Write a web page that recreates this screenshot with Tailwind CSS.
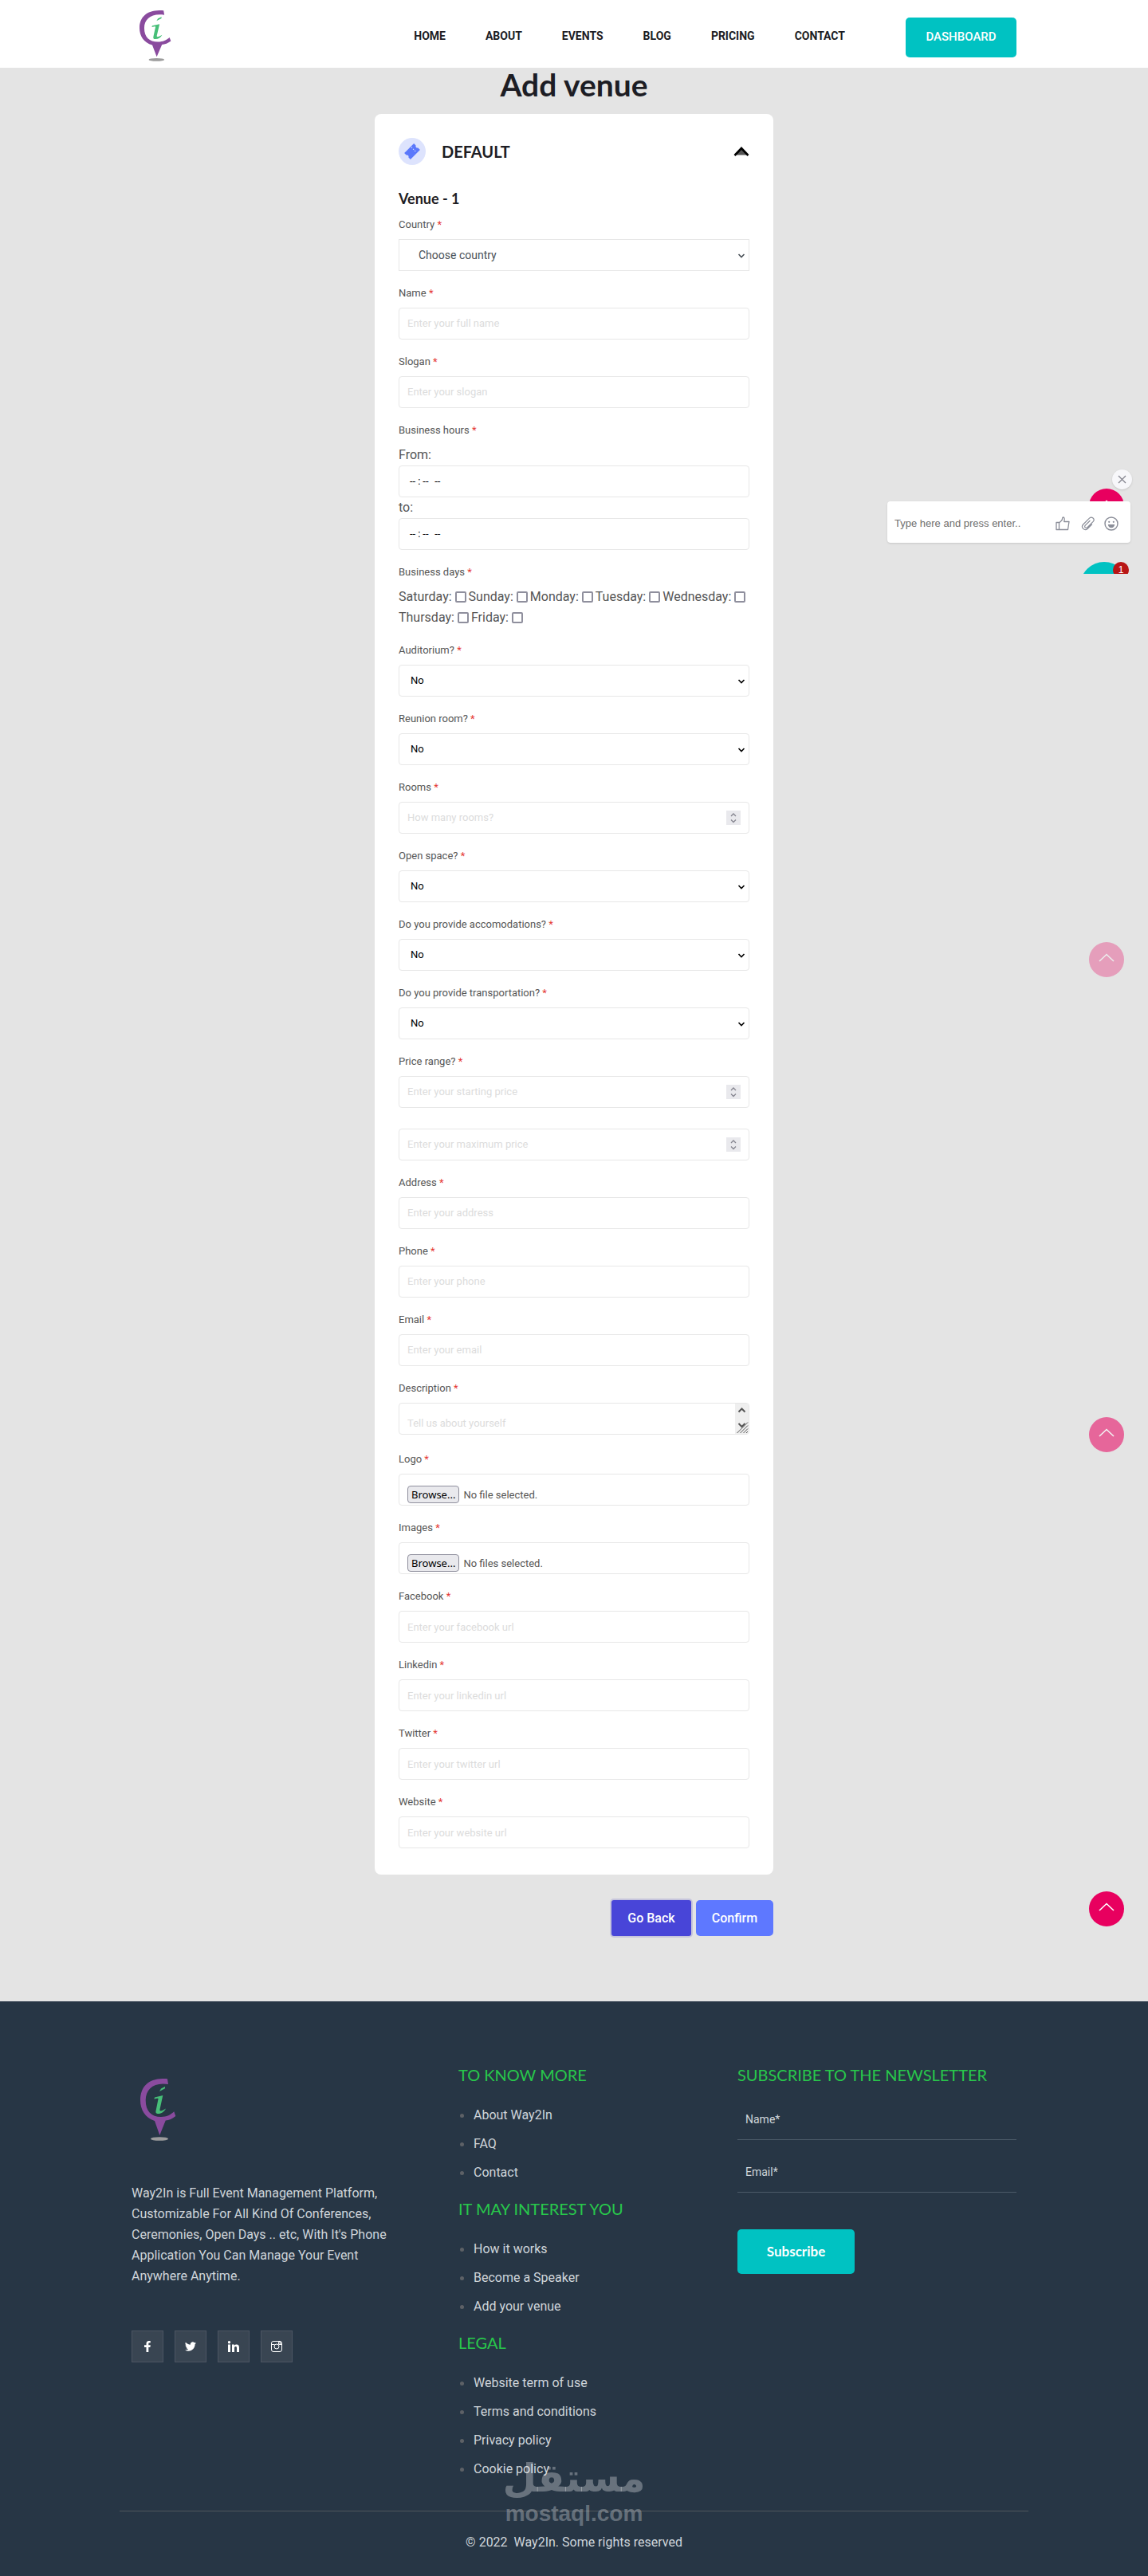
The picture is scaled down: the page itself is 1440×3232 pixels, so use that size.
<!DOCTYPE html>
<html lang="en">
<head>
<meta charset="utf-8">
<meta name="viewport" content="width=device-width, initial-scale=1">
<title>Way2In - Add venue</title>
<script src="https://cdn.jsdelivr.net/npm/@tailwindcss/browser@4"></script>
</head>
<body class="bg-[#e4e4e4] font-['Roboto',sans-serif] text-base text-[#555]">

<!-- Shared symbols -->
<svg class="hidden" aria-hidden="true">
  <symbol id="logo" viewBox="0 0 45 78" preserveAspectRatio="none">
    <path fill="#8a4b9e" d="M34 .3 35 7C17 4 6.7 13 6.7 27c0 14 7.3 21 19.3 21 7 0 12-2.500 16.300-6.700L44.300 47c-4.300 3.500-8.300 5-12.600 5.500L24.300 71 18 53C6 49 0 39 0 27 0 9 12-2 34 .3Z"/>
    <path fill="#47bf78" d="m24 16 2-3.500L31 10v2.200Zm-6.700 9.500.7-2L28.300 21l-3.800 17.500c-.5 2.500 1.500 3 7.500-1-2 4-5.500 6.500-9.500 6.500-3 0-3.500-1.500-2.800-4.500l2.800-14c.3-1.200-1-1-5.200 0Z"/>
    <ellipse cx="24" cy="75.500" rx="11" ry="2.300" fill="#9c9c9c"/>
  </symbol>
  <symbol id="down" viewBox="0 0 10 10"><path d="m1.500 3 3.500 3.500L8.500 3" fill="none" stroke="currentColor" stroke-width="1.600"/></symbol>
  <symbol id="spin" viewBox="0 0 18 18"><path fill="#e9e9ed" d="M0 0h18v18H0z"/><path d="m6 7 3-3 3 3M6 11.500l3 3 3-3" fill="none" stroke="#85858f" stroke-width="1.300"/></symbol>
  <symbol id="totop" viewBox="0 0 44 44"><path d="m13 24 9-8.500 9 8.500" fill="none" stroke="#fff" stroke-width="1.600"/></symbol>
</svg>

<div class="relative">

<header class="bg-white h-[85px]">
  <div class="max-w-[1110px] h-full mx-auto flex items-center justify-between">
    <a href="#" aria-label="Way2In" class="ml-[10px] mt-[5px]"><svg class="w-10 h-16"><use href="#logo"/></svg></a>
    <div class="flex items-center">
      <nav class="flex gap-[50px] text-sm leading-5 font-bold text-[#1d1d24] mt-1 mr-[76px]">
        <a href="#">HOME</a><a href="#">ABOUT</a><a href="#">EVENTS</a><a href="#">BLOG</a><a href="#">PRICING</a><a href="#">CONTACT</a>
      </nav>
      <a href="#" class="flex items-center justify-center mt-2 w-[139px] h-[50px] rounded-[5px] bg-[#00c2c2] text-[15px] font-medium text-white">DASHBOARD</a>
    </div>
  </div>
</header>

<main class="max-w-[500px] mx-auto pb-[82px]">
  <h1 class="text-center font-['Lato',sans-serif] font-bold text-[39px] leading-[42px] text-[#1d1d24] mb-4">Add venue</h1>

  <form>
  <section class="bg-white rounded-[8px] px-[30px] pt-[30px] pb-[33px]">
    <div class="flex items-center h-[34px] mb-[31px]">
      <svg class="size-[34px] mr-5" viewBox="0 0 34 34"><circle cx="17" cy="17" r="17" fill="#dde3fd"/><g transform="rotate(-45 17 17)"><path fill="#5b78fb" d="M8.500 11.500h17v3.500a2.200 2.200 0 0 0 0 4v3.500h-17V19a2.200 2.200 0 0 0 0-4z"/><path d="M20 12.500v9" stroke="#dde3fd" stroke-width="1" stroke-dasharray="1.500 1.500"/></g></svg>
      <h2 class="font-['Lato',sans-serif] font-bold text-xl text-[#1d1d24]">DEFAULT</h2>
      <button type="button" aria-label="Collapse" class="ml-auto"><svg class="w-5 h-3" viewBox="0 0 20 12"><path d="m2 10.500 8-8.500 8 8.500Z" fill="#555"/><path d="m1.500 11 8.500-9 8.500 9" fill="none" stroke="#000" stroke-width="2.600"/></svg></button>
    </div>
    <h3 class="font-['Lato',sans-serif] font-bold text-lg leading-[22px] text-[#1d1d24] mb-3">Venue - 1</h3>

    <div class="flex flex-col gap-[18px]">
      <div>
        <label for="country" class="block text-[13px] leading-5 mb-2">Country <span class="text-[#e53935]">*</span></label>
        <div class="relative"><select id="country" class="appearance-none block w-full h-10 border border-[#e7e7e7] bg-white pl-6 pb-px text-sm text-[#495057]"><option>Choose country</option></select><svg class="absolute right-[5px] top-4 size-[10px] text-[#495057] pointer-events-none"><use href="#down"/></svg></div>
      </div>
      <div>
        <label for="name" class="block text-[13px] leading-5 mb-2">Name <span class="text-[#e53935]">*</span></label>
        <input id="name" type="text" placeholder="Enter your full name" class="block w-full h-10 border border-[#e7e7e7] rounded-[4px] px-[10px] pb-px text-[13px] placeholder:text-[#dcdcdc]">
      </div>
      <div>
        <label for="slogan" class="block text-[13px] leading-5 mb-2">Slogan <span class="text-[#e53935]">*</span></label>
        <input id="slogan" type="text" placeholder="Enter your slogan" class="block w-full h-10 border border-[#e7e7e7] rounded-[4px] px-[10px] pb-px text-[13px] placeholder:text-[#dcdcdc]">
      </div>
      <div>
        <p class="text-[13px] leading-5 mb-2">Business hours <span class="text-[#e53935]">*</span></p>
        <label for="from" class="block leading-[26px]">From:</label>
        <input id="from" type="time" class="block w-full h-10 border border-[#e7e7e7] rounded-[4px] px-3 text-[13px] text-black [&::-webkit-calendar-picker-indicator]:hidden [&::-webkit-datetime-edit-hour-field]:mr-[2px] [&::-webkit-datetime-edit-minute-field]:ml-[2px] [&::-webkit-datetime-edit-ampm-field]:ml-1">
        <label for="to" class="block leading-[26px]">to:</label>
        <input id="to" type="time" class="block w-full h-10 border border-[#e7e7e7] rounded-[4px] px-3 text-[13px] text-black [&::-webkit-calendar-picker-indicator]:hidden [&::-webkit-datetime-edit-hour-field]:mr-[2px] [&::-webkit-datetime-edit-minute-field]:ml-[2px] [&::-webkit-datetime-edit-ampm-field]:ml-1">
      </div>
      <fieldset>
        <legend class="text-[13px] leading-5 mb-2">Business days <span class="text-[#e53935]">*</span></legend>
        <div class="flex flex-wrap gap-x-[3px] leading-[26px]">
          <label class="flex items-center gap-1">Saturday:<input type="checkbox" class="appearance-none size-[14px] border-2 border-[#8f8f9d] rounded-[2px] bg-white"></label>
          <label class="flex items-center gap-1">Sunday:<input type="checkbox" class="appearance-none size-[14px] border-2 border-[#8f8f9d] rounded-[2px] bg-white"></label>
          <label class="flex items-center gap-1">Monday:<input type="checkbox" class="appearance-none size-[14px] border-2 border-[#8f8f9d] rounded-[2px] bg-white"></label>
          <label class="flex items-center gap-1">Tuesday:<input type="checkbox" class="appearance-none size-[14px] border-2 border-[#8f8f9d] rounded-[2px] bg-white"></label>
          <label class="flex items-center gap-1">Wednesday:<input type="checkbox" class="appearance-none size-[14px] border-2 border-[#8f8f9d] rounded-[2px] bg-white"></label>
          <label class="flex items-center gap-1">Thursday:<input type="checkbox" class="appearance-none size-[14px] border-2 border-[#8f8f9d] rounded-[2px] bg-white"></label>
          <label class="flex items-center gap-1">Friday:<input type="checkbox" class="appearance-none size-[14px] border-2 border-[#8f8f9d] rounded-[2px] bg-white"></label>
        </div>
      </fieldset>
      <div>
        <label for="auditorium" class="block text-[13px] leading-5 mb-2">Auditorium? <span class="text-[#e53935]">*</span></label>
        <div class="relative"><select id="auditorium" class="appearance-none block w-full h-10 border border-[#e7e7e7] rounded-[4px] bg-white pl-[14px] text-[13px] text-black"><option>No</option><option>Yes</option></select><svg class="absolute right-[5px] top-4 size-[10px] text-black pointer-events-none"><use href="#down"/></svg></div>
      </div>
      <div>
        <label for="reunion" class="block text-[13px] leading-5 mb-2">Reunion room? <span class="text-[#e53935]">*</span></label>
        <div class="relative"><select id="reunion" class="appearance-none block w-full h-10 border border-[#e7e7e7] rounded-[4px] bg-white pl-[14px] text-[13px] text-black"><option>No</option><option>Yes</option></select><svg class="absolute right-[5px] top-4 size-[10px] text-black pointer-events-none"><use href="#down"/></svg></div>
      </div>
      <div>
        <label for="rooms" class="block text-[13px] leading-5 mb-2">Rooms <span class="text-[#e53935]">*</span></label>
        <div class="relative"><input id="rooms" type="number" placeholder="How many rooms?" class="block w-full h-10 border border-[#e7e7e7] rounded-[4px] px-[10px] pb-px text-[13px] placeholder:text-[#dcdcdc] [&::-webkit-inner-spin-button]:appearance-none"><svg class="absolute right-[11px] top-[11px] size-[18px] pointer-events-none"><use href="#spin"/></svg></div>
      </div>
      <div>
        <label for="open" class="block text-[13px] leading-5 mb-2">Open space? <span class="text-[#e53935]">*</span></label>
        <div class="relative"><select id="open" class="appearance-none block w-full h-10 border border-[#e7e7e7] rounded-[4px] bg-white pl-[14px] text-[13px] text-black"><option>No</option><option>Yes</option></select><svg class="absolute right-[5px] top-4 size-[10px] text-black pointer-events-none"><use href="#down"/></svg></div>
      </div>
      <div>
        <label for="accomodations" class="block text-[13px] leading-5 mb-2">Do you provide accomodations? <span class="text-[#e53935]">*</span></label>
        <div class="relative"><select id="accomodations" class="appearance-none block w-full h-10 border border-[#e7e7e7] rounded-[4px] bg-white pl-[14px] text-[13px] text-black"><option>No</option><option>Yes</option></select><svg class="absolute right-[5px] top-4 size-[10px] text-black pointer-events-none"><use href="#down"/></svg></div>
      </div>
      <div>
        <label for="transportation" class="block text-[13px] leading-5 mb-2">Do you provide transportation? <span class="text-[#e53935]">*</span></label>
        <div class="relative"><select id="transportation" class="appearance-none block w-full h-10 border border-[#e7e7e7] rounded-[4px] bg-white pl-[14px] text-[13px] text-black"><option>No</option><option>Yes</option></select><svg class="absolute right-[5px] top-4 size-[10px] text-black pointer-events-none"><use href="#down"/></svg></div>
      </div>
      <div>
        <label for="price-min" class="block text-[13px] leading-5 mb-2">Price range? <span class="text-[#e53935]">*</span></label>
        <div class="relative mb-[26px]"><input id="price-min" type="number" placeholder="Enter your starting price" class="block w-full h-10 border border-[#e7e7e7] rounded-[4px] px-[10px] pb-px text-[13px] placeholder:text-[#dcdcdc] [&::-webkit-inner-spin-button]:appearance-none"><svg class="absolute right-[11px] top-[11px] size-[18px] pointer-events-none"><use href="#spin"/></svg></div>
        <div class="relative"><input id="price-max" type="number" aria-label="Maximum price" placeholder="Enter your maximum price" class="block w-full h-10 border border-[#e7e7e7] rounded-[4px] px-[10px] pb-px text-[13px] placeholder:text-[#dcdcdc] [&::-webkit-inner-spin-button]:appearance-none"><svg class="absolute right-[11px] top-[11px] size-[18px] pointer-events-none"><use href="#spin"/></svg></div>
      </div>
      <div>
        <label for="address" class="block text-[13px] leading-5 mb-2">Address <span class="text-[#e53935]">*</span></label>
        <input id="address" type="text" placeholder="Enter your address" class="block w-full h-10 border border-[#e7e7e7] rounded-[4px] px-[10px] pb-px text-[13px] placeholder:text-[#dcdcdc]">
      </div>
      <div>
        <label for="phone" class="block text-[13px] leading-5 mb-2">Phone <span class="text-[#e53935]">*</span></label>
        <input id="phone" type="tel" placeholder="Enter your phone" class="block w-full h-10 border border-[#e7e7e7] rounded-[4px] px-[10px] pb-px text-[13px] placeholder:text-[#dcdcdc]">
      </div>
      <div>
        <label for="email" class="block text-[13px] leading-5 mb-2">Email <span class="text-[#e53935]">*</span></label>
        <input id="email" type="email" placeholder="Enter your email" class="block w-full h-10 border border-[#e7e7e7] rounded-[4px] px-[10px] pb-px text-[13px] placeholder:text-[#dcdcdc]">
      </div>
      <div class="mb-[3px]">
        <label for="description" class="block text-[13px] leading-5 mb-2">Description <span class="text-[#e53935]">*</span></label>
        <div class="relative">
          <textarea id="description" placeholder="Tell us about yourself" class="block w-full h-10 resize-none overflow-hidden border border-[#e7e7e7] rounded-[4px] px-[10px] pt-[15px] text-[13px] leading-5 placeholder:text-[#dcdcdc]"></textarea>
          <svg class="absolute right-px top-px w-[17px] h-[38px] pointer-events-none" viewBox="0 0 17 38"><path fill="#efefef" d="M0 0h14a3 3 0 0 1 3 3v32a3 3 0 0 1-3 3H0z"/><path d="m4.500 10.500 4-4 4 4M4.500 25l4 4 4-4" fill="none" stroke="#555" stroke-width="2"/><path d="M2.500 37 16 23.500M6.500 37l9.500-9.500M10.500 37l5.500-5.500M14 37l2-2" stroke="#555"/></svg>
        </div>
      </div>
      <div>
        <label for="logo-file" class="block text-[13px] leading-5 mb-2">Logo <span class="text-[#e53935]">*</span></label>
        <input id="logo-file" type="file" class="sr-only">
        <label for="logo-file" class="flex items-end w-full h-10 border border-[#e7e7e7] rounded-[4px] px-[10px] pb-[2px] text-[13px] leading-5"><span class="border border-[#8f8f9d] rounded-[4px] bg-[#e9e9ed] px-1 mr-[5px] text-black font-['Noto_Sans',sans-serif]">Browse...</span>No file selected.</label>
      </div>
      <div>
        <label for="images-file" class="block text-[13px] leading-5 mb-2">Images <span class="text-[#e53935]">*</span></label>
        <input id="images-file" type="file" multiple class="sr-only">
        <label for="images-file" class="flex items-end w-full h-10 border border-[#e7e7e7] rounded-[4px] px-[10px] pb-[2px] text-[13px] leading-5"><span class="border border-[#8f8f9d] rounded-[4px] bg-[#e9e9ed] px-1 mr-[5px] text-black font-['Noto_Sans',sans-serif]">Browse...</span>No files selected.</label>
      </div>
      <div>
        <label for="facebook" class="block text-[13px] leading-5 mb-2">Facebook <span class="text-[#e53935]">*</span></label>
        <input id="facebook" type="text" placeholder="Enter your facebook url" class="block w-full h-10 border border-[#e7e7e7] rounded-[4px] px-[10px] text-[13px] placeholder:text-[#dcdcdc]">
      </div>
      <div>
        <label for="linkedin" class="block text-[13px] leading-5 mb-2">Linkedin <span class="text-[#e53935]">*</span></label>
        <input id="linkedin" type="text" placeholder="Enter your linkedin url" class="block w-full h-10 border border-[#e7e7e7] rounded-[4px] px-[10px] text-[13px] placeholder:text-[#dcdcdc]">
      </div>
      <div>
        <label for="twitter" class="block text-[13px] leading-5 mb-2">Twitter <span class="text-[#e53935]">*</span></label>
        <input id="twitter" type="text" placeholder="Enter your twitter url" class="block w-full h-10 border border-[#e7e7e7] rounded-[4px] px-[10px] text-[13px] placeholder:text-[#dcdcdc]">
      </div>
      <div>
        <label for="website" class="block text-[13px] leading-5 mb-2">Website <span class="text-[#e53935]">*</span></label>
        <input id="website" type="text" placeholder="Enter your website url" class="block w-full h-10 border border-[#e7e7e7] rounded-[4px] px-[10px] text-[13px] placeholder:text-[#dcdcdc]">
      </div>
    </div>
  </section>

  <div class="flex justify-end gap-[6px] mt-8">
    <button type="button" class="w-[100px] h-[45px] rounded-[3px] bg-[#4845d8] ring-2 ring-[#c6c5dc] font-medium text-white">Go Back</button>
    <button type="submit" class="w-[97px] h-[45px] rounded-[5px] bg-[#5e78ff] font-medium text-white">Confirm</button>
  </div>
  </form>
</main>

<footer class="bg-[#273645] px-5 pt-[78px] pb-[29px] text-[#cfd5da]">
  <div class="max-w-[1110px] mx-auto grid grid-cols-[380fr_320fr_350fr] gap-x-[30px]">
    <div class="pt-[19px]">
      <svg class="w-[45px] h-[78px] ml-[11px]"><use href="#logo"/></svg>
      <p class="mt-[53px] pr-[30px] leading-[26px]">Way2In is Full Event Management Platform, Customizable For All Kind Of Conferences, Ceremonies, Open Days .. etc, With It's Phone Application You Can Manage Your Event Anywhere Anytime.</p>
      <div class="flex gap-[14px] mt-[55px] text-white">
        <a href="#" aria-label="Facebook" class="size-10 flex items-center justify-center bg-[#394552] border border-[#4c5563]"><svg class="size-[14px]" viewBox="0 0 14 14" fill="currentColor"><path d="M5.500 14V8H3V5.200h2.500V3.500C5.500 1.200 6.700 0 8.700 0h2v2.600H9.400C8.600 2.600 8.300 3 8.300 3.700v1.500h2.500L10.400 8H8.300v6z"/></svg></a>
        <a href="#" aria-label="Twitter" class="size-10 flex items-center justify-center bg-[#394552] border border-[#4c5563]"><svg class="size-[14px]" viewBox="0 0 24 24" fill="currentColor"><path d="M23.950 4.570a10 10 0 0 1-2.820.770 4.960 4.960 0 0 0 2.160-2.720c-.950.560-2 .960-3.130 1.180a4.920 4.920 0 0 0-8.380 4.480C7.690 8.090 4.070 6.130 1.640 3.160a4.900 4.900 0 0 0 1.520 6.570 4.900 4.900 0 0 1-2.230-.610v.060a4.920 4.920 0 0 0 3.950 4.830 5 5 0 0 1-2.210.080 4.940 4.940 0 0 0 4.600 3.420A9.870 9.870 0 0 1 0 19.540a14 14 0 0 0 7.550 2.210c9.050 0 14-7.500 14-13.980l-.020-.630a10 10 0 0 0 2.420-2.570z"/></svg></a>
        <a href="#" aria-label="LinkedIn" class="size-10 flex items-center justify-center bg-[#394552] border border-[#4c5563]"><svg class="size-[14px]" viewBox="0 0 14 14" fill="currentColor"><path d="M0 4.600h3V14H0zM5 4.600h2.800v1.300c.6-1 1.600-1.500 2.900-1.500 2.400 0 3.300 1.500 3.300 4V14h-3V9c0-1.300-.3-2.100-1.400-2.100C8.500 6.900 8 7.700 8 9v5H5z"/><circle cx="1.500" cy="1.700" r="1.700"/></svg></a>
        <a href="#" aria-label="Instagram" class="size-10 flex items-center justify-center bg-[#394552] border border-[#4c5563]"><svg class="size-[14px]" viewBox="0 0 14 14" fill="none" stroke="currentColor"><rect x=".5" y=".5" width="13" height="13" rx="2.500"/><circle cx="7" cy="7" r="3"/><path d="M.5 4.500h4M9.500 4.500h4M9.500 1.500h2.500v2.500h-2.500z"/></svg></a>
      </div>
    </div>
    <div>
      <h4 class="font-['Lato',sans-serif] text-xl leading-7 text-[#28c84b] mb-[19px]">TO KNOW MORE</h4>
      <ul class="leading-9 mb-[13px]">
        <li class="flex items-center gap-3 pl-[2px]"><span class="size-[5px] rounded-full bg-[#5d6166]"></span><a href="#">About Way2In</a></li>
        <li class="flex items-center gap-3 pl-[2px]"><span class="size-[5px] rounded-full bg-[#5d6166]"></span><a href="#">FAQ</a></li>
        <li class="flex items-center gap-3 pl-[2px]"><span class="size-[5px] rounded-full bg-[#5d6166]"></span><a href="#">Contact</a></li>
      </ul>
      <h4 class="font-['Lato',sans-serif] text-xl leading-7 text-[#28c84b] mb-[19px]">IT MAY INTEREST YOU</h4>
      <ul class="leading-9 mb-[13px]">
        <li class="flex items-center gap-3 pl-[2px]"><span class="size-[5px] rounded-full bg-[#5d6166]"></span><a href="#">How it works</a></li>
        <li class="flex items-center gap-3 pl-[2px]"><span class="size-[5px] rounded-full bg-[#5d6166]"></span><a href="#">Become a Speaker</a></li>
        <li class="flex items-center gap-3 pl-[2px]"><span class="size-[5px] rounded-full bg-[#5d6166]"></span><a href="#">Add your venue</a></li>
      </ul>
      <h4 class="font-['Lato',sans-serif] text-xl leading-7 text-[#28c84b] mb-[19px]">LEGAL</h4>
      <ul class="leading-9">
        <li class="flex items-center gap-3 pl-[2px]"><span class="size-[5px] rounded-full bg-[#5d6166]"></span><a href="#">Website term of use</a></li>
        <li class="flex items-center gap-3 pl-[2px]"><span class="size-[5px] rounded-full bg-[#5d6166]"></span><a href="#">Terms and conditions</a></li>
        <li class="flex items-center gap-3 pl-[2px]"><span class="size-[5px] rounded-full bg-[#5d6166]"></span><a href="#">Privacy policy</a></li>
        <li class="flex items-center gap-3 pl-[2px]"><span class="size-[5px] rounded-full bg-[#5d6166]"></span><a href="#">Cookie policy</a></li>
      </ul>
    </div>
    <form>
      <h4 class="font-['Lato',sans-serif] text-xl leading-7 text-[#28c84b] mb-[18px]">SUBSCRIBE TO THE NEWSLETTER</h4>
      <input type="text" aria-label="Name" placeholder="Name*" class="block w-full h-[50px] mb-4 px-[10px] pb-px border-b border-[#4b5a68] text-sm placeholder:text-[#cfd5da]">
      <input type="email" aria-label="Email" placeholder="Email*" class="block w-full h-[50px] mb-[46px] px-[10px] pb-px border-b border-[#4b5a68] text-sm placeholder:text-[#cfd5da]">
      <button type="submit" class="w-[147px] h-14 rounded-[5px] bg-[#00c2c2] font-['Lato',sans-serif] font-bold text-[17px] text-white">Subscribe</button>
    </form>
  </div>
  <div class="relative max-w-[1140px] mx-auto mt-[34px] pt-[26px] border-t border-[#50565c] text-center leading-[26px]">
    <p class="whitespace-pre-wrap">© 2022  Way2In. Some rights reserved</p>
    <div class="absolute left-1/2 -translate-x-1/2 -top-[71px] flex flex-col items-center font-bold text-white/30 pointer-events-none">
      <span lang="ar" dir="rtl" class="font-['DejaVu_Sans',sans-serif] text-[49px] leading-[60px]">مستقل</span>
      <span class="font-['Liberation_Sans',sans-serif] text-[28px] leading-7">mostaql.com</span>
    </div>
  </div>
</footer>

<!-- Floating widgets -->
<a href="#" aria-label="Back to top" class="absolute right-[30px] top-[613px] size-11 rounded-full bg-[#e8005f]"><svg class="size-11"><use href="#totop"/></svg></a>
<a href="#" aria-label="Back to top" class="absolute right-[30px] top-[1182px] size-11 rounded-full bg-[#e8005f] opacity-30"><svg class="size-11"><use href="#totop"/></svg></a>
<a href="#" aria-label="Back to top" class="absolute right-[30px] top-[1778px] size-11 rounded-full bg-[#e8005f] opacity-55"><svg class="size-11"><use href="#totop"/></svg></a>
<a href="#" aria-label="Back to top" class="absolute right-[30px] top-[2373px] size-11 rounded-full bg-[#e8005f]"><svg class="size-11"><use href="#totop"/></svg></a>
<button type="button" aria-label="Close chat" class="absolute right-5 top-[589px] size-[25px] rounded-full bg-[#f7f7fa] shadow-sm flex items-center justify-center"><svg class="size-[11px]" viewBox="0 0 11 11"><path d="m1 1 9 9M10 1l-9 9" stroke="#85858f" stroke-width="1.300"/></svg></button>
<div class="absolute right-[22px] top-[629px] w-[305px] h-[52px] rounded-[4px] bg-white shadow flex items-center pl-[9px] pr-[15px] text-[#8a8d98]">
  <input type="text" aria-label="Message" placeholder="Type here and press enter.." class="flex-1 min-w-0 mt-1 font-['Liberation_Sans',sans-serif] text-[13px] placeholder:text-[#6f6f6f]">
  <svg class="size-[18px] mt-[3px] mr-[14px]" viewBox="0 0 18 18" fill="none" stroke="currentColor" stroke-width="1.300" stroke-linejoin="round"><path d="M1 7.500h3.500v9H1zM4.500 8 8 4.800C8.500 4 8.200 1 9.500 1c2 0 2 3 1.200 5.500h6.300l-1.500 10h-11"/></svg>
  <svg class="size-[18px] mt-[3px] mr-[11px]" viewBox="0 0 18 18" fill="none" stroke="currentColor" stroke-width="1.200" stroke-linecap="round"><path d="M13.500 10 8.300 15.200C4.500 18.800-.8 13.800 2.700 10L10.500 2.200c3-3 7.500 1 4.700 4.200L8 13.700c-2 1.800-4.500-.6-2.700-2.500L11 5.500"/></svg>
  <svg class="size-[18px] mt-[3px]" viewBox="0 0 18 18" fill="none" stroke="currentColor" stroke-width="1.400"><circle cx="9" cy="9" r="8"/><circle cx="6.200" cy="6.800" r="1.100" fill="currentColor" stroke="none"/><circle cx="11.800" cy="6.800" r="1.100" fill="currentColor" stroke="none"/><path d="M4.800 10h8.400a4.200 4.200 0 0 1-8.400 0z" fill="currentColor" stroke="none"/></svg>
</div>
<div class="absolute right-6 top-[705px] w-[61px] h-[15px] overflow-hidden">
  <div class="size-[60px] rounded-full bg-[#00c2c2]"></div>
  <span class="absolute right-0 top-0 size-5 rounded-full bg-[#b81515] text-white text-xs leading-5 text-center font-['Liberation_Sans',sans-serif]">1</span>
</div>

</div>
</body>
</html>
